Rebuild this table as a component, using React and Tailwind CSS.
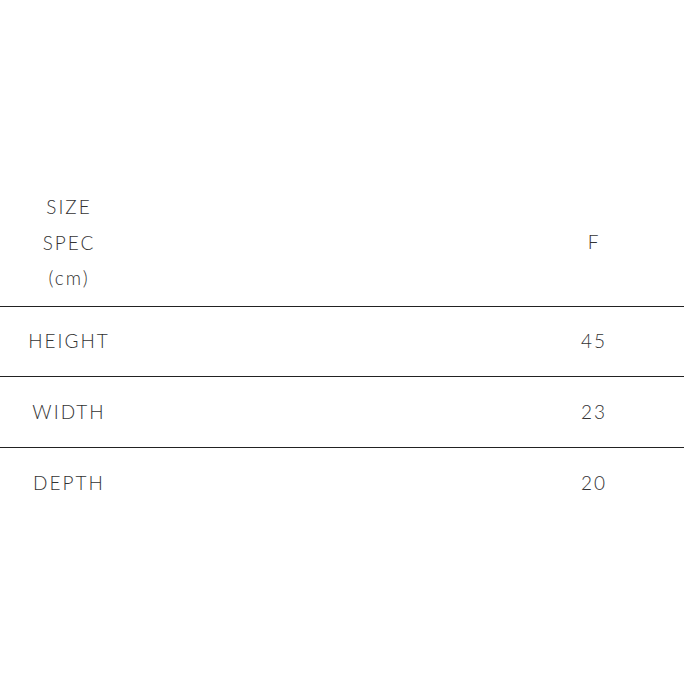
import React from 'react';

const rows = [
  { label: 'HEIGHT', value: '45' },
  { label: 'WIDTH', value: '23' },
  { label: 'DEPTH', value: '20' },
];

const App = () => {
  return (
    <div className="w-[684px] h-[684px] bg-white flex flex-col pt-[179px] font-['Lato','Noto_Sans',sans-serif] font-light text-[19px] tracking-[2px] text-[#333]">
      <div className="grid grid-cols-[138px_1fr_180px] items-center py-[10px] border-b border-[#222]">
        <div className="flex flex-col items-center leading-[35.5px]">
          <span>SIZE</span>
          <span>SPEC</span>
          <span>(cm)</span>
        </div>
        <div></div>
        <div className="text-center">F</div>
      </div>
      {rows.map((row, i) => (
        <div
          key={row.label}
          className={`grid grid-cols-[138px_1fr_180px] items-center h-[70.5px] ${i < rows.length - 1 ? 'border-b border-[#222]' : ''}`}
        >
          <div className="text-center">{row.label}</div>
          <div></div>
          <div className="text-center">{row.value}</div>
        </div>
      ))}
    </div>
  );
};

export default App;
